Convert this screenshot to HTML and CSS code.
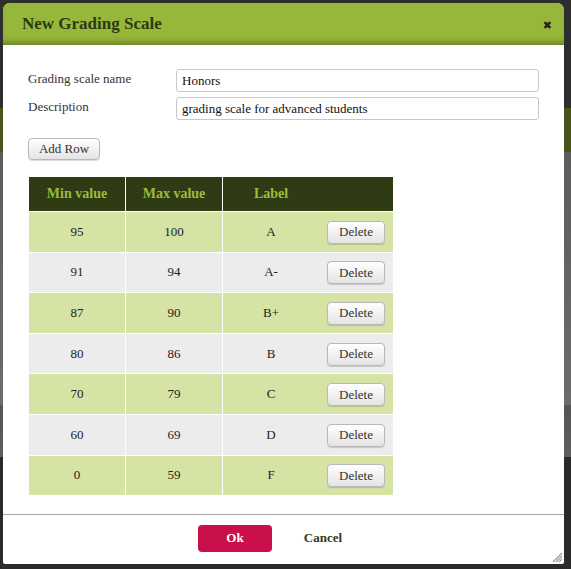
FILE: index.html
```html
<!DOCTYPE html>
<html>
<head>
<meta charset="utf-8">
<link rel="stylesheet" href="styles.css">
</head>
<body>
<div class="dialog">
  <div class="dlg-head">
    <h1 class="dlg-title">New Grading Scale</h1>
    <span class="dlg-close">&#x2716;</span>
  </div>
  <div class="dlg-body">
    <div class="field">
      <label class="field-label">Grading scale name</label>
      <input class="field-input" type="text" value="Honors">
    </div>
    <div class="field">
      <label class="field-label">Description</label>
      <input class="field-input" type="text" value="grading scale for advanced students">
    </div>
    <button class="btn add-row">Add Row</button>
    <table class="scale">
      <thead>
        <tr><th class="c1">Min value</th><th class="c2">Max value</th><th class="c3">Label</th><th class="c4"></th></tr>
      </thead>
      <tbody>
        <tr class="odd"><td>95</td><td>100</td><td>A</td><td class="act"><button class="btn del">Delete</button></td></tr>
        <tr class="even"><td>91</td><td>94</td><td>A-</td><td class="act"><button class="btn del">Delete</button></td></tr>
        <tr class="odd"><td>87</td><td>90</td><td>B+</td><td class="act"><button class="btn del">Delete</button></td></tr>
        <tr class="even"><td>80</td><td>86</td><td>B</td><td class="act"><button class="btn del">Delete</button></td></tr>
        <tr class="odd"><td>70</td><td>79</td><td>C</td><td class="act"><button class="btn del">Delete</button></td></tr>
        <tr class="even"><td>60</td><td>69</td><td>D</td><td class="act"><button class="btn del">Delete</button></td></tr>
        <tr class="odd"><td>0</td><td>59</td><td>F</td><td class="act"><button class="btn del">Delete</button></td></tr>
      </tbody>
    </table>
  </div>
  <div class="dlg-foot">
    <button class="btn-ok">Ok</button>
    <button class="btn-cancel">Cancel</button>
    <svg class="grip" width="12" height="12" viewBox="0 0 12 12"><path d="M11 2 L2 11 M11 5 L5 11 M11 8 L8 11" stroke="#9a9a9a" stroke-width="1.2" fill="none"/></svg>
  </div>
</div>
</body>
</html>
```
FILE: styles.css
```css
html, body {
  margin: 0;
  padding: 0;
}
body, input, button, table, th, td, label, h1 {
  font-family: "Liberation Serif", "DejaVu Serif", serif;
}
body {
  width: 571px;
  height: 569px;
  overflow: hidden;
  background: linear-gradient(to bottom,
    #2e2e2e 0, #2e2e2e 108px,
    #4b521c 108px, #4b521c 152px,
    #5c5c5c 152px, #6c6c6c 405px,
    #555 405px, #5e5e5e 457px,
    #2a2a2a 457px, #2a2a2a 100%);
}
.dialog {
  margin: 3px 0 0 3px;
  width: 561px;
  height: 561px;
  background: #fff;
  border-radius: 7px 7px 2px 2px;
  display: flex;
  flex-direction: column;
  overflow: hidden;
}
.dlg-head {
  height: 42px;
  flex: none;
  background: #97b73a;
  box-shadow: inset 0 -7px 6px -4px rgba(40, 50, 10, 0.4);
  display: flex;
  align-items: center;
  justify-content: space-between;
  padding: 0 12px 0 19px;
}
.dlg-title {
  margin: 0;
  font-size: 17px;
  font-weight: bold;
  color: #2c3a12;
}
.dlg-close {
  font-size: 11px;
  color: #222;
  font-family: "DejaVu Sans", sans-serif;
  margin-top: 2px;
}
.dlg-body {
  flex: 1;
  padding: 24px 25px 0 25px;
}
.field {
  display: flex;
  align-items: center;
  margin-bottom: 5px;
}
.field-label {
  width: 148px;
  font-size: 13px;
  color: #333;
  margin-top: -3px;
}
.field-input {
  width: 363px;
  height: 23px;
  box-sizing: border-box;
  border: 1px solid #c8c8c8;
  border-radius: 3px;
  padding: 0 5px;
  font-size: 13px;
  color: #111;
  margin: 0;
}
.btn {
  font-size: 13px;
  color: #333;
  background: linear-gradient(to bottom, #ffffff, #e4e4e4);
  border: 1px solid #b8b8b8;
  border-radius: 4px;
  box-shadow: 0 1px 1px rgba(0,0,0,0.15);
  padding: 0;
  cursor: pointer;
}
.add-row {
  margin-top: 13px;
  width: 72px;
  height: 22px;
}
.scale {
  margin: 17px 0 0 1px;
  border-collapse: collapse;
  width: 364px;
}
.scale th {
  height: 34px;
  padding: 0;
  background: #2e3b13;
  color: #9dbc3c;
  font-size: 14px;
  font-weight: bold;
  text-align: center;
  border-left: 1px solid #fff;
}
.scale th.c1 { width: 96px; border-left: none; }
.scale th.c2 { width: 96px; }
.scale th.c3 { width: 96px; }
.scale th.c4 { border-left: none; }
.scale td {
  height: 39.6px;
  padding: 0;
  text-align: center;
  font-size: 13px;
  color: #222;
  border-top: 1px solid #fff;
  border-left: 1px solid #fff;
}
.scale td:first-child { border-left: none; }
.scale td.act { border-left: none; text-align: left; padding-left: 8px; }
.scale tr.odd td { background: #d5e3a4; }
.scale tr.even td { background: #ececec; }
.del {
  width: 58px;
  height: 23px;
  margin-top: 1px;
}
.dlg-foot {
  flex: none;
  height: 50px;
  box-sizing: border-box;
  border-top: 1px solid #a8a8a8;
  display: flex;
  align-items: center;
  padding: 0 0 3px 195px;
  position: relative;
}
.btn-ok {
  width: 74px;
  height: 27px;
  background: #c9104a;
  color: #fff;
  border: none;
  border-radius: 4px;
  font-size: 13px;
  font-weight: bold;
  padding: 0;
}
.btn-cancel {
  margin-left: 14px;
  width: 74px;
  height: 27px;
  background: none;
  border: none;
  color: #373716;
  font-size: 13px;
  font-weight: bold;
  padding: 0;
}
.grip {
  position: absolute;
  right: 1px;
  bottom: 1px;
}
```
